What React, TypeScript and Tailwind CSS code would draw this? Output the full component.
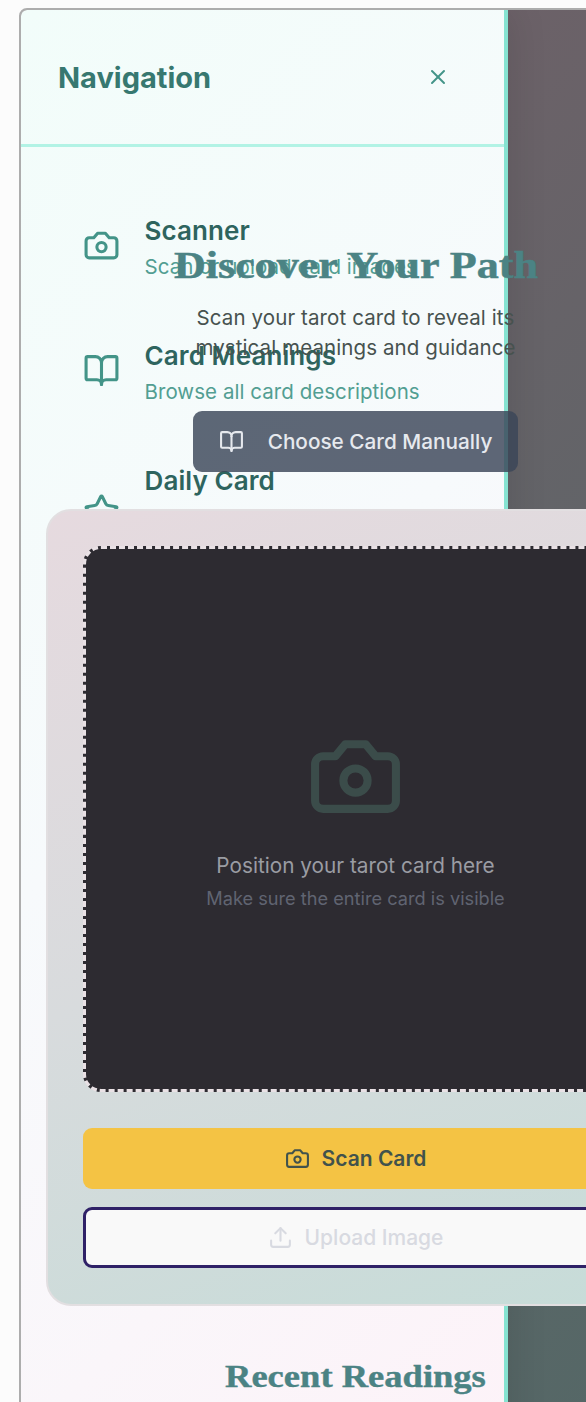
import { BookOpen, Star, Upload, X } from "lucide-react";

function Camera({ className }: { className?: string }) {
  return (
    <svg viewBox="0 0 24 24" fill="none" stroke="currentColor" strokeWidth="2" strokeLinecap="round" strokeLinejoin="round" className={className}>
      <path d="M14.5 4h-5L7 7H4a2 2 0 0 0-2 2v9a2 2 0 0 0 2 2h16a2 2 0 0 0 2-2V9a2 2 0 0 0-2-2h-3l-2.5-3z" />
      <circle cx="12" cy="13" r="3" />
    </svg>
  );
}

const items = [
  { Icon: Camera, title: "Scanner", text: "Scan or upload card images", offset: "mt-[15px]", textOffset: "mt-[2px]" },
  { Icon: BookOpen, title: "Card Meanings", text: "Browse all card descriptions", offset: "mt-[15px]", textOffset: "mt-[2px]" },
  { Icon: Star, title: "Daily Card", text: "View your tarot card for daily guidance", offset: "mt-[31px]", textOffset: "mt-[4px]" },
];

function Sidebar() {
  return (
    <aside className="col-start-1 row-start-1 h-[1500px] w-[487px] border-r-4 border-[#86e3d1] bg-linear-135 from-[#f2fdfa] via-[#f7fafc] via-45% to-[#fdf2f8] shadow-[0_0_38px_rgba(0,0,0,0.12)]">
      <header className="flex h-[137px] items-start justify-between border-b-[3px] border-[#b2f3e5] pt-[46px] pr-[54px] pl-[37px]">
        <h2 className="text-[29px] leading-[44px] font-bold text-[#377870]">Navigation</h2>
        <X className="mt-[9px] size-[24px] text-[#439488]" strokeWidth={2} />
      </header>
      <nav className="flex flex-col pt-[65px] pl-[62px]">
        {items.map(({ Icon, title, text, offset, textOffset }) => (
          <div key={title} className="flex h-[125px] gap-[24.5px]">
            <Icon className={`${offset} size-[37px] shrink-0 text-[#439488]`} />
            <div>
              <h3 className="text-[26px] leading-[38px] font-semibold tracking-[0.1px] text-[#2e645e]">{title}</h3>
              <p className={`${textOffset} w-[278px] text-[20.5px] leading-[30px] tracking-[0.05px] text-[#529e92]`}>{text}</p>
            </div>
          </div>
        ))}
      </nav>
    </aside>
  );
}

function Scanner() {
  return (
    <section className="mt-[37px] flex h-[797px] w-[619px] flex-col rounded-[25px] border-2 border-[#e2dfe1] bg-linear-160 from-[#e6dadf] via-[#d8dbdd] to-[#c6dcd8] p-[35px]">
      <div className="flex h-[546px] shrink-0 flex-col items-center rounded-[18px] border-[3px] border-dashed border-[#e9e1e5] bg-[#2d2b31] pt-[179px]">
        <Camera className="size-[97px] text-[#3b4c4a]" />
        <p className="mt-[26px] text-[20.75px] leading-[30px] text-[#9a9ca3]">Position your tarot card here</p>
        <p className="mt-[5px] text-[18.2px] leading-[24px] text-[#606471]">Make sure the entire card is visible</p>
      </div>
      <button className="mt-[36px] flex h-[61px] shrink-0 items-center justify-center gap-[12px] rounded-[9px] bg-[#f4c344] text-[21px] font-semibold text-[#41524c]">
        <Camera className="size-[25px]" />
        Scan Card
      </button>
      <button className="mt-[18px] flex h-[61px] shrink-0 items-center justify-center gap-[12px] rounded-[9px] border-[3px] border-[#2f2167] bg-[#f9f9f9] text-[21px] font-medium text-[#d8dae1]">
        <Upload className="size-[25px]" />
        Upload Image
      </button>
    </section>
  );
}

export default function App() {
  return (
    <div className="h-[1402px] w-full overflow-hidden bg-[#fcfcfc] pt-[8px] pl-[19px] font-['Inter',sans-serif]">
      <div className="grid h-[1500px] w-[673px] grid-cols-1 overflow-hidden rounded-[8px] border-2 border-[#adadad] bg-linear-135 from-[#706068] from-10% via-[#626468] via-50% to-[#526866]">
        <Sidebar />
        <main className="z-10 col-start-1 row-start-1 flex flex-col items-center pt-[232px]">
          <h1 className="scale-x-[1.16] text-[38px] leading-[46px] font-bold whitespace-nowrap text-[#4b8384] font-['Liberation_Serif',serif] [-webkit-text-stroke:0.5px_#4b8384]">Discover Your Path</h1>
          <p className="mt-[15px] text-center text-[20.5px] leading-[30px] tracking-[0.1px] whitespace-nowrap text-[#47524f]">
            Scan your tarot card to reveal its
            <br />
            mystical meanings and guidance
          </p>
          <button className="mt-[48px] flex h-[61px] w-[325px] items-center justify-center gap-[24px] rounded-[9px] bg-[#3b4658]/82 text-[20.75px] font-medium whitespace-nowrap text-[#e6e9ee]">
            <BookOpen className="size-[25px]" />
            Choose Card Manually
          </button>
          <Scanner />
          <h2 className="mt-[48px] scale-x-[1.16] text-[31.5px] leading-[46px] font-bold text-[#4b8384] font-['Liberation_Serif',serif] [-webkit-text-stroke:0.4px_#4b8384]">Recent Readings</h2>
        </main>
      </div>
    </div>
  );
}
